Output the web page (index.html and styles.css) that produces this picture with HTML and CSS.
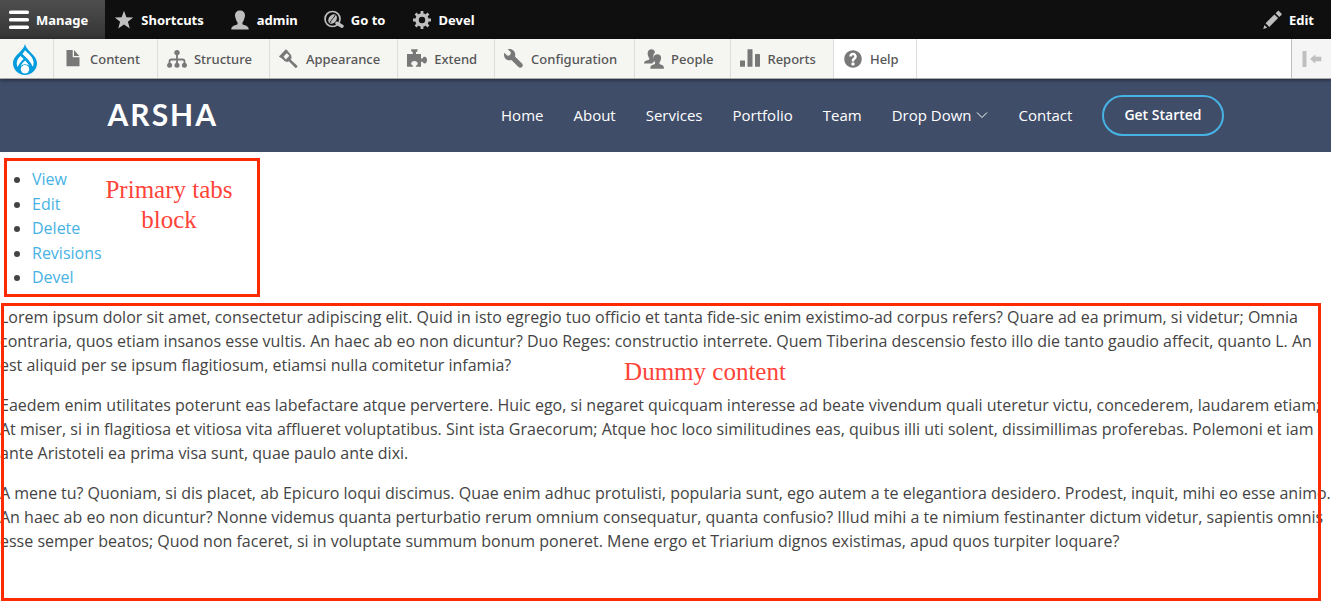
FILE: index.html
```html
<!DOCTYPE html>
<html lang="en">
<head>
<meta charset="utf-8">
<meta name="viewport" content="width=device-width, initial-scale=1">
<title>Arsha</title>
<link rel="stylesheet" href="styles.css">
</head>
<body>
<nav class="toolbar-bar" aria-label="Toolbar">
  <button class="bar-item bar-item-active" type="button">
    <svg class="icon" viewBox="0 0 20 20"><rect y=".5" width="20" height="3.500" rx="1.600"/><rect y="8" width="20" height="3.500" rx="1.600"/><rect y="15.500" width="20" height="3.500" rx="1.600"/></svg>
    Manage
  </button>
  <button class="bar-item" type="button">
    <svg class="icon" viewBox="0 0 20 20"><path d="M10 .8l2.4 6.400 6.800.3-5.300 4.200 1.900 6.700L10 14.500l-5.800 3.900 1.900-6.700L.8 7.500l6.800-.3z"/></svg>
    Shortcuts
  </button>
  <button class="bar-item" type="button">
    <svg class="icon" viewBox="0 0 20 20"><path d="M10 .5c3 0 5 2 5 5 0 1.200-.3 2-.7 2.900-.3 1.500-1 2.900-1.800 3.900v1.500c0 .7.500 1 1.500 1.300 2.800.7 4.600 1.500 4.800 4.400H1.200c.2-2.900 2-3.700 4.800-4.400 1-.3 1.500-.6 1.500-1.300v-1.500c-.8-1-1.500-2.400-1.800-3.900C5.300 7.500 5 6.700 5 5.500c0-3 2-5 5-5z"/></svg>
    admin
  </button>
  <button class="bar-item" type="button">
    <svg class="icon" viewBox="0 0 20 20"><circle cx="8.500" cy="9" r="7.500" fill="none" stroke="currentColor" stroke-width="1.700"/><ellipse cx="8.600" cy="9" rx="3.800" ry="5.300" transform="rotate(35 8.600 9)"/><path d="M11.300 4.900C10 8.200 7.300 9.100 5.900 13.100" fill="none" stroke="#0f0f0f" stroke-width=".9"/><path d="M13 13.200l5 3" stroke="currentColor" stroke-width="3.400" stroke-linecap="round"/></svg>
    Go to
  </button>
  <button class="bar-item" type="button">
    <svg class="icon" viewBox="0 0 20 20"><g fill="none" stroke="currentColor"><circle cx="10" cy="10" r="5" stroke-width="3.600"/><path stroke-width="2.800" d="M10 1v4M10 15v4M1 10h4M15 10h4M3.600 3.600l2.800 2.800M13.600 13.600l2.800 2.800M3.600 16.400l2.800-2.800M13.600 6.400l2.800-2.800"/></g></svg>
    Devel
  </button>
  <button class="bar-item bar-item-end" type="button">
    <svg class="icon" viewBox="0 0 20 20"><path d="M1.200 19L2.500 15l2.700 2.700zM3.600 13.200L12.400 4.400l3.700 3.700-8.800 8.800zM13.600 3.200l2-2c.5-.5 1-.5 1.500 0l2.300 2.300c.4.400.4 1 0 1.400l-2.100 2z"/></svg>
    Edit
  </button>
</nav>

<nav class="tray" aria-label="Administration menu">
  <a class="tray-home" href="#" aria-label="Drupal">
    <svg class="drop" viewBox="0 0 24 31"><path fill="#009cde" d="M12 0c-1 4-3.200 6.100-5.900 8.700C3 11.800 0 14.700 0 19.300 0 25.800 5.400 31 12 31s12-5.200 12-11.700c0-4.600-3-7.500-6.100-10.600C15.200 6.100 13 4 12 0z"/><g fill="#fff"><path d="M12 6.300c2.200 2.600 8.600 6.400 8.600 12.700 0 1.400-.3 2.600-.8 3.700-2-4.600-6-8.700-10.400-12.600.8-1.100 1.800-2.300 2.600-3.800z"/><path d="M7.600 12l3 2.900c-2.500 2.200-4.600 4.800-6 8-1.600-3.600-1-7.500 3-10.900z"/><path d="M12.200 16.600c1.900 1.900 3.500 3.900 4.700 6.100-2.600-3.200-7-3.200-9.600-.2 1.200-2.300 2.900-4.200 4.900-5.900z"/><circle cx="12" cy="25.200" r="4.200"/></g></svg>
  </a>
  <a class="tray-item" href="#"><svg class="icon" viewBox="0 0 20 20"><path d="M3.500 1h6.200v7.300h6.800v9h-13zM11 1l5.300 5.900H11z"/></svg>Content</a>
  <a class="tray-item" href="#"><svg class="icon" viewBox="0 0 20 20"><g fill="none" stroke="currentColor" stroke-width="1.800"><path d="M10 4v13M2.500 17v-4.500q0-2 2-2h11q2 0 2 2V17"/></g><circle cx="10" cy="3.600" r="2.700"/><circle cx="2.600" cy="16.200" r="2.500"/><circle cx="10" cy="16.200" r="2.500"/><circle cx="17.400" cy="16.200" r="2.500"/></svg>Structure</a>
  <a class="tray-item" href="#"><svg class="icon" viewBox="0 0 20 20"><path fill-rule="evenodd" d="M6.800.2l2.200 1.800c.5 1.400 2 2.200 3.300 4.500l.2 3-1 1 6.800 6.300c.8.800-1.100 2.700-2 1.900l-6.500-6.500-1.200.8-2.900-.7C4.100 9.900 1.500 8.800-.2 7.600zM7.800 4.200L4.500 7.600l2.300 3 3.600-3.800z"/></svg>Appearance</a>
  <a class="tray-item" href="#"><svg class="icon" viewBox="0 0 20 20"><path d="M0 5h5.800V3.200c-1.300-.3-1.700-1-1.700-2.900h6.600c0 1.900-.4 2.600-1.700 2.900V5h5v4.500h1.500c.5-1.400 1.300-1.800 2.300-1.800 1.400 0 2.200 1.500 2.200 3.400s-.8 3.400-2.200 3.400c-1 0-1.800-.5-2.300-1.700H14v4.900H8.900v-1c1.300-.4 1.800-1.100 1.800-2.200 0-1.500-1.400-2.400-3.300-2.400s-3.200.9-3.200 2.400c0 1.100.6 1.800 1.800 2.200v1H0z"/></svg>Extend</a>
  <a class="tray-item" href="#"><svg class="icon" viewBox="0 0 16 16"><path d="M14.416 11.586l-5.666-5.665c.15-.449.252-.921.252-1.421 0-2.485-2.016-4.500-4.502-4.500-.505 0-.981.102-1.434.255l2.431 2.431-.588 2.196-2.196.588-2.445-2.445c-.162.464-.268.956-.268 1.475 0 2.486 2.014 4.500 4.500 4.500.5 0 .972-.102 1.421-.251l5.667 5.665c.781.781 2.047.781 2.828 0s.781-2.047 0-2.828z"/></svg>Configuration</a>
  <a class="tray-item" href="#"><svg class="icon" viewBox="0 0 20 20"><path d="M7.300.3c2.300 0 3.600 1.300 3.600 3.500-1.500 1-2 3.300-1 6l.8 1.800-2.500 2.900H0c.1-2.100 1.200-2.800 3.500-3.300 1.300-.3 1.800-.7 1.800-1.300 0-.9-.7-1.500-1.100-2.700-.6-1.600-.7-3-.3-4.400C4.400 1.200 5.500.3 7.300.3z"/><path d="M13.400 5.200c2.300 0 3.700 1.500 3.700 3.500 0 1.600-.6 3.500-1.700 4.800 0 1.500.5 1.900 1.900 2.300 1.900.5 2.600 1.500 2.700 3.900H6.300c.1-2.400.8-3.400 2.700-3.900 1.400-.4 2.200-.8 2.200-2.300-1.200-1.300-1.600-3.200-1.600-4.800 0-2 1.500-3.500 3.800-3.500z"/></svg>People</a>
  <a class="tray-item" href="#"><svg class="icon" viewBox="0 0 20 20"><rect y="11.500" width="5" height="6.200" rx=".4"/><rect x="7.500" y=".3" width="5" height="17.400" rx=".4"/><rect x="15" y="5" width="5" height="12.700" rx=".4"/></svg>Reports</a>
  <a class="tray-item tray-item-active" href="#"><svg class="icon" viewBox="0 0 16 16"><path fill-rule="evenodd" d="M8.002 1c-3.868 0-7.002 3.134-7.002 7s3.134 7 7.002 7c3.865 0 7-3.134 7-7s-3.135-7-7-7zm3 5c0 .551-.16 1.085-.477 1.586l-.158.22c-.07.093-.189.241-.361.393-.168.148-.35.299-.545.447l-.203.189-.141.129-.096.17-.021.235v.63h-2.001v-.704c.026-.396.078-.73.204-.999.125-.269.271-.498.439-.688l.225-.21.166-.155.137-.128c.186-.139.357-.277.516-.417l.148-.18c.098-.152.168-.323.168-.518 0-.552-.447-1-1.002-1-.551 0-.998.448-.998 1h-2.002c0-1.657 1.343-3 3-3 1.656 0 3 1.343 3 3zm-1.750 6.619c0 .344-.281.625-.625.625h-1.250c-.345 0-.626-.281-.626-.625v-1.238c0-.344.281-.625.626-.625h1.250c.344 0 .625.281.625.625v1.238z"/></svg>Help</a>
  <button class="tray-toggle" type="button" aria-label="Vertical orientation">
    <svg class="icon" viewBox="0 0 20 20"><path d="M.5 2h4v16h-4zM8 10l5.300-4.600v2.400h6v4.400h-6v2.400z"/></svg>
  </button>
</nav>

<header class="site-header">
  <div class="container">
    <a class="logo" href="#">ARSHA</a>
    <nav class="site-nav" aria-label="Main">
      <a href="#">Home</a>
      <a href="#">About</a>
      <a href="#">Services</a>
      <a href="#">Portfolio</a>
      <a href="#">Team</a>
      <a class="has-menu" href="#">Drop Down <svg class="chevron" viewBox="0 0 12 12"><path d="M1 3.500l5 5 5-5"/></svg></a>
      <a href="#">Contact</a>
      <a class="cta" href="#">Get Started</a>
    </nav>
  </div>
</header>

<main>
  <section class="tabs-block">
    <ul class="tabs">
      <li><a href="#">View</a></li>
      <li><a href="#">Edit</a></li>
      <li><a href="#">Delete</a></li>
      <li><a href="#">Revisions</a></li>
      <li><a href="#">Devel</a></li>
    </ul>
    <p class="note note-tabs">Primary tabs block</p>
  </section>

  <section class="content">
    <p>Lorem ipsum dolor sit amet, consectetur adipiscing elit. Quid in isto egregio tuo officio et tanta fide-sic enim existimo-ad corpus refers? Quare ad ea primum, si videtur; Omnia contraria, quos etiam insanos esse vultis. An haec ab eo non dicuntur? Duo Reges: constructio interrete. Quem Tiberina descensio festo illo die tanto gaudio affecit, quanto L. An est aliquid per se ipsum flagitiosum, etiamsi nulla comitetur infamia?</p>
    <p>Eaedem enim utilitates poterunt eas labefactare atque pervertere. Huic ego, si negaret quicquam interesse ad beate vivendum quali uteretur victu, concederem, laudarem etiam; At miser, si in flagitiosa et vitiosa vita afflueret voluptatibus. Sint ista Graecorum; Atque hoc loco similitudines eas, quibus illi uti solent, dissimillimas proferebas. Polemoni et iam ante Aristoteli ea prima visa sunt, quae paulo ante dixi.</p>
    <p>A mene tu? Quoniam, si dis placet, ab Epicuro loqui discimus. Quae enim adhuc protulisti, popularia sunt, ego autem a te elegantiora desidero. Prodest, inquit, mihi eo esse animo. An haec ab eo non dicuntur? Nonne videmus quanta perturbatio rerum omnium consequatur, quanta confusio? Illud mihi a te nimium festinanter dictum videtur, sapientis omnis esse semper beatos; Quod non faceret, si in voluptate summum bonum poneret. Mene ergo et Triarium dignos existimas, apud quos turpiter loquare?</p>
    <div class="content-frame"><span class="note">Dummy content</span></div>
  </section>
</main>
</body>
</html>
```

FILE: styles.css
```css
* { box-sizing: border-box; }

body {
  margin: 0;
  background: #fff;
  color: #444;
  font: 16px/24px "Open Sans", sans-serif;
}

a { color: #47b2e4; text-decoration: none; }
button { margin: 0; border: 0; cursor: pointer; }
.icon { width: 20px; height: 20px; flex: none; fill: currentColor; }

/* Admin toolbar */
.toolbar-bar {
  display: flex;
  height: 39px;
  background: #0f0f0f;
}
.bar-item {
  display: flex;
  align-items: center;
  gap: 7px;
  padding: 0 17px 0 9px;
  background: none;
  color: #fff;
  font: bold 13px/20px "Noto Sans", "Open Sans", sans-serif;
}
.bar-item .icon { color: #bebebe; }
.bar-item-active { background: linear-gradient(#4e4e4e, #343434); }
.bar-item-active .icon { color: #fff; }
.bar-item-end { margin-left: auto; }

.tray {
  position: relative;
  display: flex;
  height: 40px;
  background: #fff;
  border-bottom: 1px solid #aaa;
  box-shadow: 0 1px 4px rgba(0, 0, 0, .5);
}
.tray-home {
  display: flex;
  align-items: center;
  justify-content: center;
  width: 54px;
  padding: 2px 4px 0 0;
  background: #f5f5f2;
  border-right: 1px solid #ddd;
}
.drop { width: 24px; height: 31px; }
.tray-item {
  display: flex;
  align-items: center;
  gap: 7px;
  padding: 0 17px 0 9px;
  background: #f5f5f2;
  border-right: 1px solid #ddd;
  color: #565656;
  font: 500 13px/20px "Noto Sans", "Open Sans", sans-serif;
}
.tray-item .icon { color: #787878; }
.tray-item-active { background: #fff; }
.tray-toggle {
  display: flex;
  align-items: center;
  justify-content: center;
  width: 40px;
  padding: 0;
  margin-left: auto;
  background: #f5f5f5;
  border-left: 1px solid #bfbfbf;
  color: #bfbfbf;
}

/* Site header */
.site-header { padding: 16px 0; background: #3f4d69; }
.container {
  display: flex;
  align-items: center;
  justify-content: space-between;
  max-width: 1140px;
  margin: 0 auto;
  padding: 0 12px;
}
.logo {
  padding-bottom: 3px;
  color: #fff;
  font: bold 30px/36px Lato, sans-serif;
  letter-spacing: 2px;
}
.site-nav { display: flex; align-items: center; gap: 30px; }
.site-nav a {
  padding-bottom: 2px;
  color: #fff;
  font-size: 15px;
  font-weight: 500;
}
.site-nav .has-menu { display: flex; align-items: center; gap: 5px; }
.chevron { width: 12px; height: 12px; fill: none; stroke: #fff; stroke-width: 1; }
.site-nav .cta {
  padding: 8px 20px 9px;
  border: 2px solid #47b2e4;
  border-radius: 50px;
  font-size: 14px;
  line-height: 20px;
  font-weight: 600;
}

/* Page content */
.tabs-block {
  display: flex;
  width: 256px;
  min-height: 139px;
  margin: 6px 4px;
  padding: 6px 0 5px;
  border: 3px solid #ff2a00;
}
.tabs {
  display: flex;
  flex-direction: column;
  justify-content: space-between;
  width: 96px;
  margin: 0;
  padding: 0 0 0 25px;
}
.tabs a { font-weight: 500; }
.note {
  color: #ff4338;
  font: 25px/30px "Liberation Serif", "Times New Roman", serif;
}
.note-tabs { width: 132px; margin: 8px 0; text-align: center; }

.content { position: relative; padding: 2px 0 32px; }
.content p { margin: 0 0 16px; }
.content-frame {
  position: absolute;
  inset: 0 10px 0 1px;
  display: flex;
  justify-content: center;
  padding-top: 51px;
  border: 3px solid #ff2a00;
}
.content-frame .note { padding-left: 88px; }
```
